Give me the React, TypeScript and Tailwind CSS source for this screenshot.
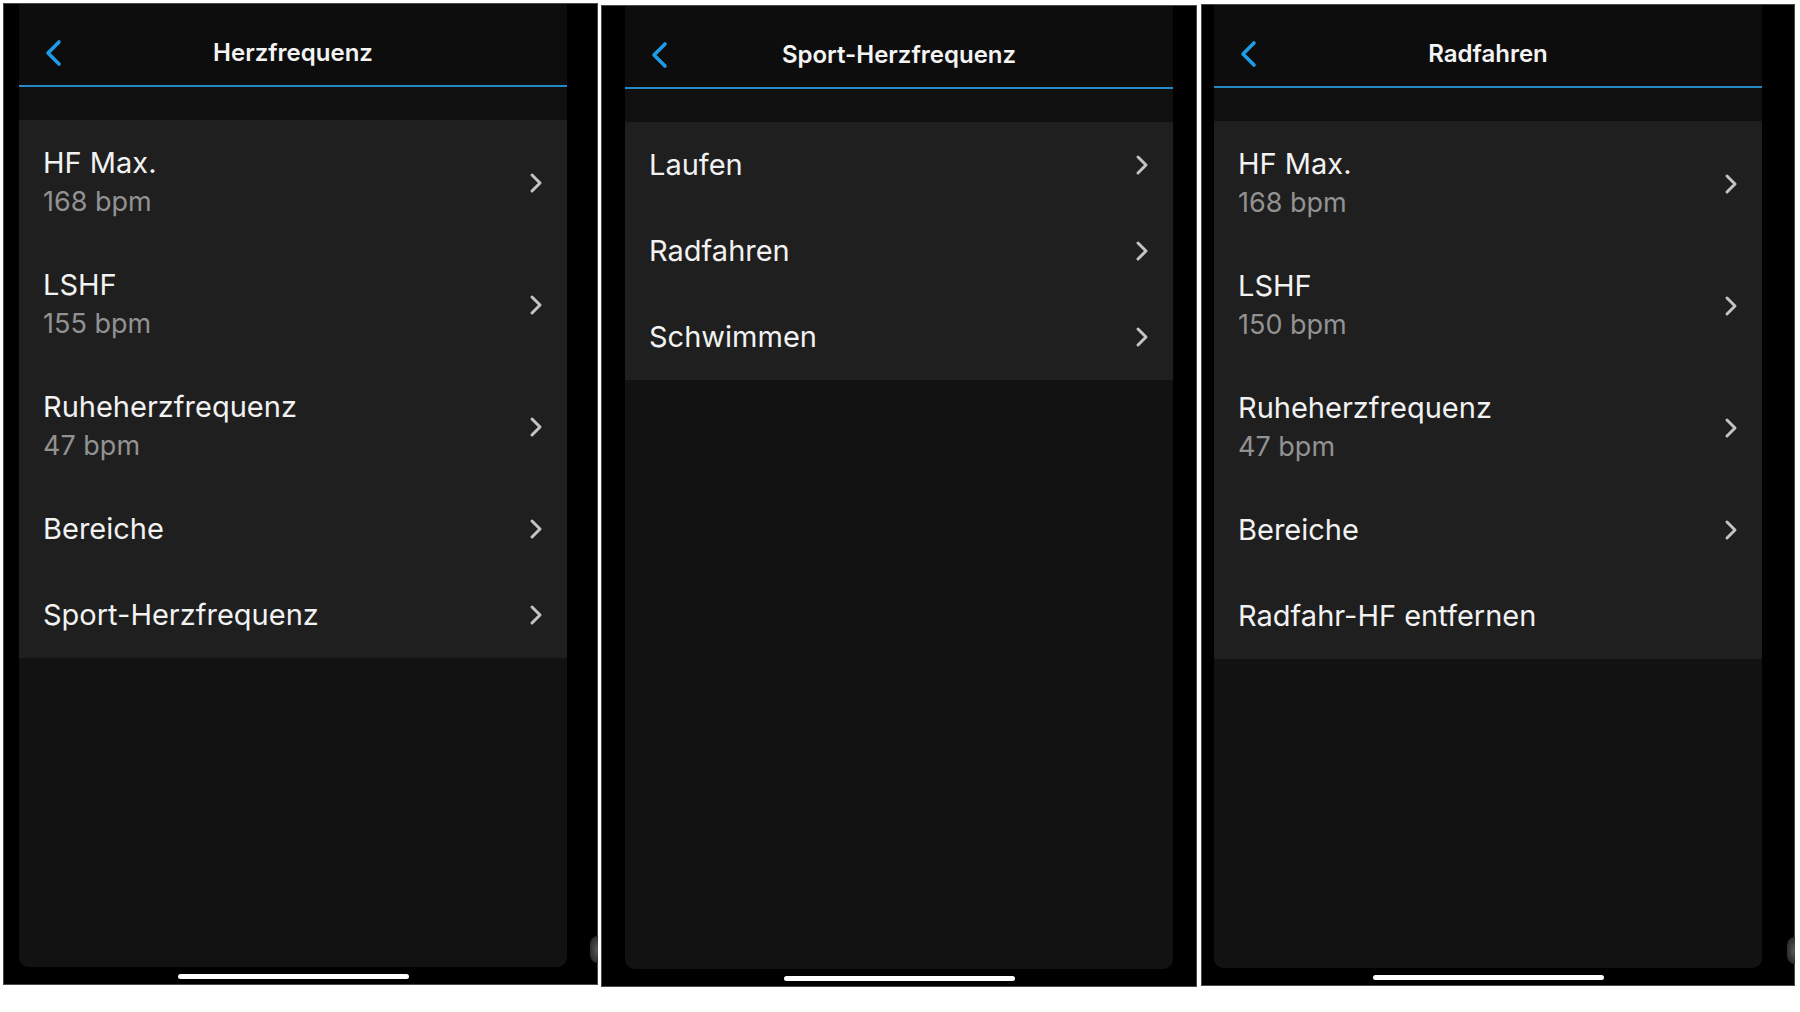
import React from 'react';

type Row = { title: string; sub?: string; chevron?: boolean };

const hfRows: Row[] = [
  { title: 'HF Max.', sub: '168 bpm', chevron: true },
  { title: 'LSHF', sub: '155 bpm', chevron: true },
  { title: 'Ruheherzfrequenz', sub: '47 bpm', chevron: true },
  { title: 'Bereiche', chevron: true },
  { title: 'Sport-Herzfrequenz', chevron: true },
];

const sportRows: Row[] = [
  { title: 'Laufen', chevron: true },
  { title: 'Radfahren', chevron: true },
  { title: 'Schwimmen', chevron: true },
];

const bikeRows: Row[] = [
  { title: 'HF Max.', sub: '168 bpm', chevron: true },
  { title: 'LSHF', sub: '150 bpm', chevron: true },
  { title: 'Ruheherzfrequenz', sub: '47 bpm', chevron: true },
  { title: 'Bereiche', chevron: true },
  { title: 'Radfahr-HF entfernen' },
];

function BackIcon() {
  return (
    <svg width="18" height="28" viewBox="0 0 18 28" fill="none">
      <path d="M15 3 L4 14 L15 25" stroke="#1e9de6" strokeWidth="3.6" strokeLinecap="round" strokeLinejoin="round" />
    </svg>
  );
}

function ChevronIcon() {
  return (
    <svg width="14" height="22" viewBox="0 0 14 22" fill="none">
      <path d="M3 3 L11 11 L3 19" stroke="#c4c4c4" strokeWidth="3" strokeLinecap="round" strokeLinejoin="round" />
    </svg>
  );
}

function ListRow({ row }: { row: Row }) {
  return (
    <div className={row.sub ? 'flex items-center justify-between px-6 pt-[24px] pb-[20px]' : 'flex items-center justify-between px-6 h-[86px]'}>
      <div className="flex flex-col">
        <span className="text-[29px] leading-[38px] text-[#f2f2f2]">{row.title}</span>
        {row.sub && <span className="text-[27px] leading-[40px] text-[#929292]">{row.sub}</span>}
      </div>
      {row.chevron && <ChevronIcon />}
    </div>
  );
}

function Phone({ title, rows, outer, top, screenLeft, bump }: { title: string; rows: Row[]; outer: string; top: string; screenLeft: string; bump?: boolean }) {
  return (
    <div className={`relative flex flex-col h-[982px] bg-black border border-[#4a4a4a] ${outer} ${top}`}>
      <div className={`w-[548px] h-[963px] ${screenLeft} flex flex-col rounded-b-[10px] overflow-hidden bg-[#121212]`}>
        <div className="h-[81px] pt-[16px] bg-[#0d0d0d] grid grid-cols-[1fr_auto_1fr] items-center">
          <div className="pl-[25px] flex items-center">
            <BackIcon />
          </div>
          <span className="text-[24px] font-semibold text-[#f4f4f4]">{title}</span>
          <div />
        </div>
        <div className="h-[2px] bg-[#2589c8]" />
        <div className="h-[33px] bg-[#101010]" />
        <div className="bg-[#1f1f1f] flex flex-col">
          {rows.map((r, i) => (
            <ListRow key={i} row={r} />
          ))}
        </div>
        <div className="flex-1 bg-[#121212]" />
      </div>
      <div className={`w-[548px] ${screenLeft} flex justify-center pt-[7px]`}>
        <div className="w-[231px] h-[5px] rounded-full bg-white" />
      </div>
      {bump && (
        <div className="absolute right-[-1px] top-[932px] w-[8px] h-[27px] rounded-l-full bg-[radial-gradient(ellipse_at_right,#5a5a5a,#1a1a1a)]" />
      )}
    </div>
  );
}

export default function App() {
  return (
    <div className="w-[1800px] h-[1012px] bg-white flex items-start pl-[3px] gap-[3px]" style={{ fontFamily: 'Inter, "Noto Sans", sans-serif' }}>
      <Phone title="Herzfrequenz" rows={hfRows} outer="w-[595px]" top="mt-[3px]" screenLeft="ml-[15px]" bump />
      <Phone title="Sport-Herzfrequenz" rows={sportRows} outer="w-[596px]" top="mt-[5px]" screenLeft="ml-[23px]" />
      <Phone title="Radfahren" rows={bikeRows} outer="w-[594px] ml-[1px]" top="mt-[4px]" screenLeft="ml-[12px]" bump />
    </div>
  );
}
